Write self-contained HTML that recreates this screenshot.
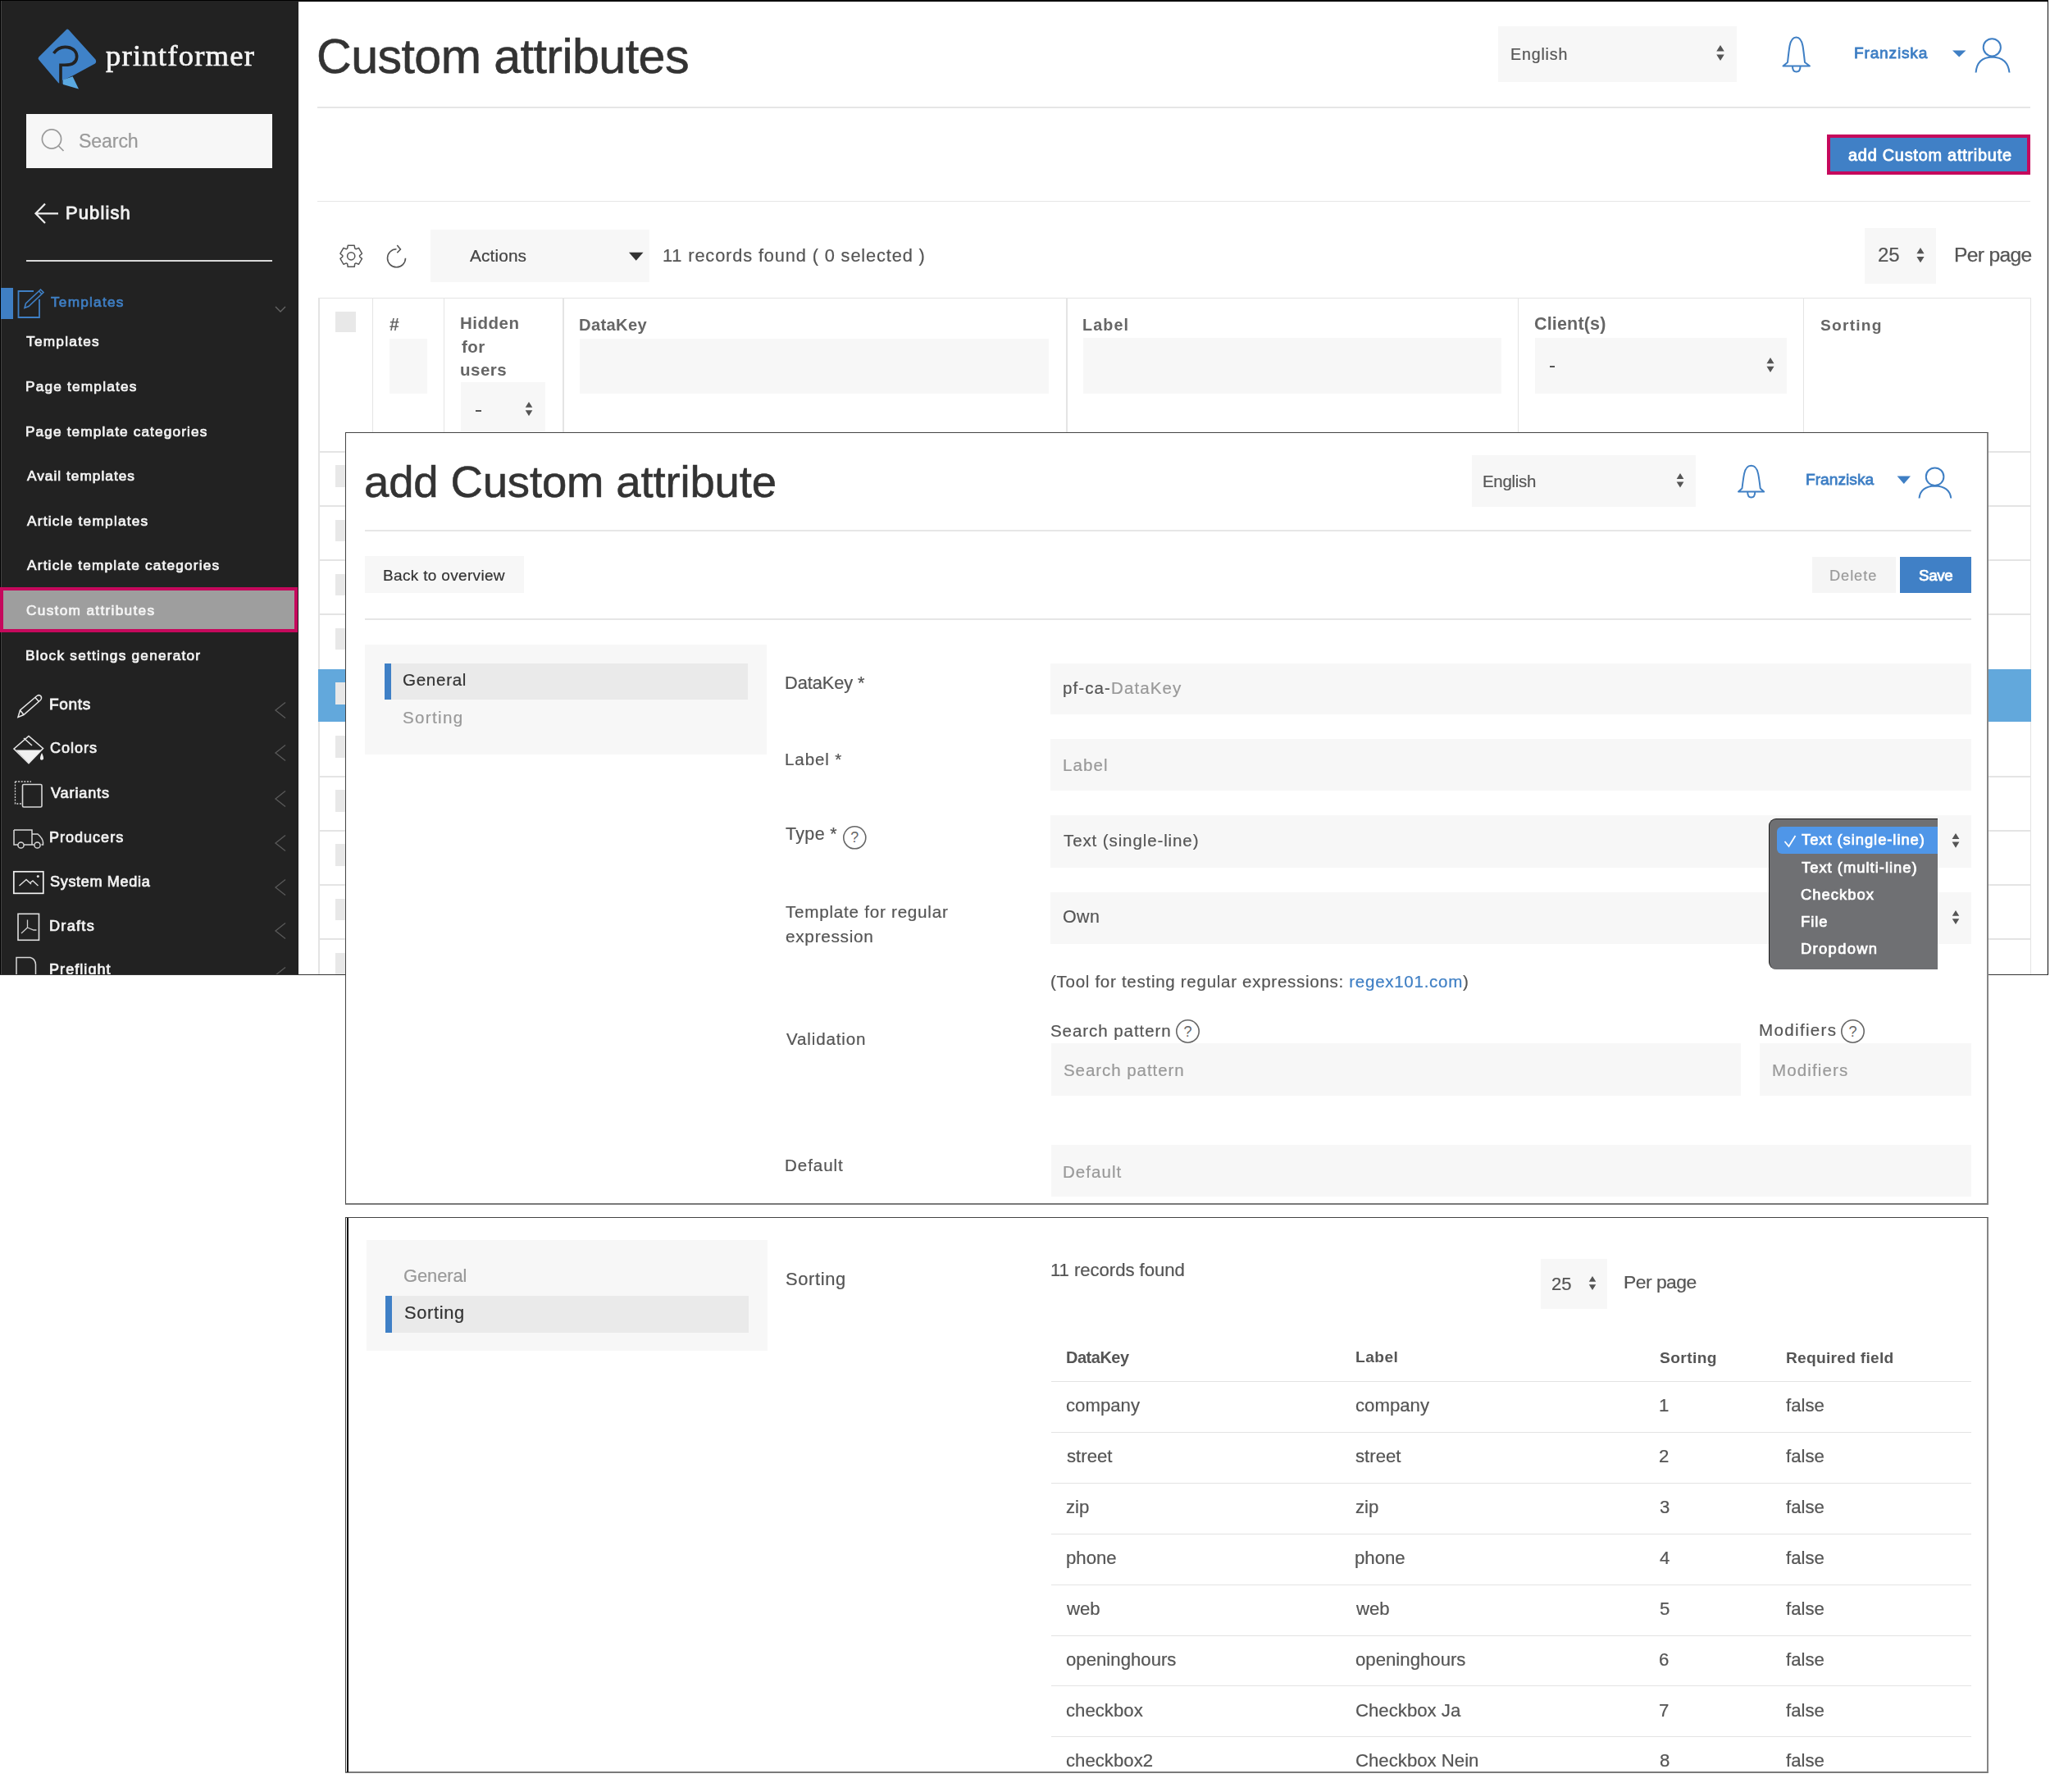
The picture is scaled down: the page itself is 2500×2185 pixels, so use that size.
<!DOCTYPE html>
<html><head><meta charset="utf-8"><title>Custom attributes</title>
<style>
html,body{margin:0;padding:0;background:#fff;}
body{width:2500px;height:2185px;position:relative;overflow:hidden;font-family:"Liberation Sans",sans-serif;}
div,svg{position:absolute;}
.t{line-height:1;white-space:pre;will-change:transform;}
</style></head><body>
<div style="left:0;top:0;width:364px;height:1188px;background:#222;overflow:hidden" id="sb">
<div style="left:0px;top:0px;width:364px;height:1px;background:#000;"></div>
<div style="left:0px;top:0px;width:1px;height:1188px;background:#000;"></div>
<div style="left:1px;top:1px;width:1px;height:1187px;background:#444;"></div>
<svg style="left:40px;top:30px;width:85px;height:82px" viewBox="40 30 85 82"><path d="M81.3,35.7 Q82.5,35 83.7,36.3 L116.5,72.5 Q118,75.5 116,77.5 L89.3,92 L76.5,98 L76.5,102.5 L71.3,101.2 L47.2,72.8 Q45.8,71.3 47.3,69.6 Z" fill="#3f82c8"/><path d="M77,97.2 L88.6,93.2 L96,108.5 L77,103 Z" fill="#5aa8e0"/><path d="M65.5,65 C70,58.5 77,56.8 82.5,57.6 C90,58.6 94.2,64 93.6,70 C93,76.5 87,79.3 79,79.3 L74,79.3 L74,103" fill="none" stroke="#222" stroke-width="3.6"/></svg>
<div class="t" style="left:129.13px;top:50.33px;font-size:36.62px;letter-spacing:1.218px;color:#f4f4f4;-webkit-text-stroke:0.7px;font-family:'Liberation Serif', serif">printformer</div>
<div style="left:32px;top:139px;width:300px;height:66px;background:#f7f7f7;"></div>
<svg style="left:45px;top:150px;width:40px;height:42px" viewBox="45 150 40 42"><circle cx="63" cy="169.5" r="11.6" fill="none" stroke="#9a9a9a" stroke-width="1.7"/><path d="M71.5,178 L77.5,184" stroke="#9a9a9a" stroke-width="1.7"/></svg>
<div class="t" style="left:96.37px;top:160.80px;font-size:23.15px;letter-spacing:-0.125px;color:#9a9a9a;-webkit-text-stroke:0.23px;font-family:'Liberation Sans', sans-serif">Search</div>
<svg style="left:38px;top:244px;width:38px;height:31px" viewBox="38 244 38 31"><path d="M71,260.3 L44,260.3 M55,248.5 L43.5,260.3 L55,272" fill="none" stroke="#eee" stroke-width="2.2"/></svg>
<div class="t" style="left:79.55px;top:248.85px;font-size:21.92px;letter-spacing:1.133px;color:#f2f2f2;-webkit-text-stroke:0.88px;font-family:'Liberation Sans', sans-serif">Publish</div>
<div style="left:32px;top:317px;width:300px;height:2px;background:#d9d9d9;"></div>
<div style="left:1px;top:351px;width:15px;height:38px;background:#3f7fc4;"></div>
<svg style="left:18px;top:350px;width:38px;height:42px" viewBox="18 350 38 42"><path d="M41,355 L22.5,355 L22.5,387 L48,387 L48,365" fill="none" stroke="#3f7fc4" stroke-width="1.8"/><path d="M30,375.5 L31.5,370 L49.5,353 L53,356.5 L35,373.5 Z M47.5,355 L51,358.5" fill="none" stroke="#3f7fc4" stroke-width="1.6"/></svg>
<div class="t" style="left:62.15px;top:359.99px;font-size:17.26px;letter-spacing:1.212px;color:#3f7fc4;-webkit-text-stroke:0.69px;font-family:'Liberation Sans', sans-serif">Templates</div>
<svg style="left:330px;top:368px;width:24px;height:18px" viewBox="330 368 24 18"><path d="M336,374 L342,380 L348,374" fill="none" stroke="#666" stroke-width="1.3"/></svg>
<div style="left:0px;top:716px;width:363px;height:55px;background:#9e9e9e;box-sizing:border-box;border:4px solid #c5095c"></div>
<div class="t" style="left:32.15px;top:407.99px;font-size:17.26px;letter-spacing:1.262px;color:#f4f4f4;-webkit-text-stroke:0.69px;font-family:'Liberation Sans', sans-serif">Templates</div>
<div class="t" style="left:31.12px;top:462.99px;font-size:17.26px;letter-spacing:1.189px;color:#f4f4f4;-webkit-text-stroke:0.69px;font-family:'Liberation Sans', sans-serif">Page templates</div>
<div class="t" style="left:31.12px;top:517.99px;font-size:17.26px;letter-spacing:1.116px;color:#f4f4f4;-webkit-text-stroke:0.69px;font-family:'Liberation Sans', sans-serif">Page template categories</div>
<div class="t" style="left:32.50px;top:571.79px;font-size:17.26px;letter-spacing:1.021px;color:#f4f4f4;-webkit-text-stroke:0.69px;font-family:'Liberation Sans', sans-serif">Avail templates</div>
<div class="t" style="left:32.50px;top:626.79px;font-size:17.26px;letter-spacing:1.234px;color:#f4f4f4;-webkit-text-stroke:0.69px;font-family:'Liberation Sans', sans-serif">Article templates</div>
<div class="t" style="left:32.50px;top:680.99px;font-size:17.26px;letter-spacing:1.190px;color:#f4f4f4;-webkit-text-stroke:0.69px;font-family:'Liberation Sans', sans-serif">Article template categories</div>
<div class="t" style="left:31.64px;top:735.99px;font-size:17.26px;letter-spacing:1.308px;color:#f4f4f4;-webkit-text-stroke:0.69px;font-family:'Liberation Sans', sans-serif">Custom attributes</div>
<div class="t" style="left:31.12px;top:791.09px;font-size:17.26px;letter-spacing:1.219px;color:#f4f4f4;-webkit-text-stroke:0.69px;font-family:'Liberation Sans', sans-serif">Block settings generator</div>
<div class="t" style="left:60.27px;top:849.31px;font-size:19.13px;letter-spacing:0.615px;color:#f2f2f2;-webkit-text-stroke:0.77px;font-family:'Liberation Sans', sans-serif">Fonts</div>
<svg style="left:330px;top:853.5px;width:24px;height:24.0px" viewBox="330 853.5 24 24.0"><path d="M348,856.0 L336,865.5 L348,875.0" fill="none" stroke="#5a5a5a" stroke-width="1.3"/></svg>
<div class="t" style="left:60.90px;top:903.09px;font-size:18.08px;letter-spacing:0.979px;color:#f2f2f2;-webkit-text-stroke:0.72px;font-family:'Liberation Sans', sans-serif">Colors</div>
<svg style="left:330px;top:906.4px;width:24px;height:24.0px" viewBox="330 906.4 24 24.0"><path d="M348,908.9 L336,918.4 L348,927.9" fill="none" stroke="#5a5a5a" stroke-width="1.3"/></svg>
<div class="t" style="left:61.80px;top:958.19px;font-size:18.08px;letter-spacing:0.864px;color:#f2f2f2;-webkit-text-stroke:0.72px;font-family:'Liberation Sans', sans-serif">Variants</div>
<svg style="left:330px;top:961.5px;width:24px;height:24.0px" viewBox="330 961.5 24 24.0"><path d="M348,964.0 L336,973.5 L348,983.0" fill="none" stroke="#5a5a5a" stroke-width="1.3"/></svg>
<div class="t" style="left:60.35px;top:1012.19px;font-size:18.08px;letter-spacing:0.972px;color:#f2f2f2;-webkit-text-stroke:0.72px;font-family:'Liberation Sans', sans-serif">Producers</div>
<svg style="left:330px;top:1015.5px;width:24px;height:24.0px" viewBox="330 1015.5 24 24.0"><path d="M348,1018.0 L336,1027.5 L348,1037.0" fill="none" stroke="#5a5a5a" stroke-width="1.3"/></svg>
<div class="t" style="left:61.08px;top:1066.39px;font-size:18.08px;letter-spacing:0.654px;color:#f2f2f2;-webkit-text-stroke:0.72px;font-family:'Liberation Sans', sans-serif">System Media</div>
<svg style="left:330px;top:1069.7px;width:24px;height:24.0px" viewBox="330 1069.7 24 24.0"><path d="M348,1072.2 L336,1081.7 L348,1091.2" fill="none" stroke="#5a5a5a" stroke-width="1.3"/></svg>
<div class="t" style="left:60.35px;top:1119.69px;font-size:18.08px;letter-spacing:1.293px;color:#f2f2f2;-webkit-text-stroke:0.72px;font-family:'Liberation Sans', sans-serif">Drafts</div>
<svg style="left:330px;top:1123px;width:24px;height:24px" viewBox="330 1123 24 24"><path d="M348,1125.5 L336,1135 L348,1144.5" fill="none" stroke="#5a5a5a" stroke-width="1.3"/></svg>
<div class="t" style="left:60.35px;top:1173.19px;font-size:18.08px;letter-spacing:1.034px;color:#f2f2f2;-webkit-text-stroke:0.72px;font-family:'Liberation Sans', sans-serif">Preflight</div>
<svg style="left:330px;top:1176.5px;width:24px;height:24.0px" viewBox="330 1176.5 24 24.0"><path d="M348,1179.0 L336,1188.5 L348,1198.0" fill="none" stroke="#5a5a5a" stroke-width="1.3"/></svg>
<svg style="left:16px;top:842px;width:40px;height:38px" viewBox="16 842 40 38"><path d="M22,874.5 L24.5,866 L45,848.5 Q48,846.5 50,849 Q51.5,851.5 49,854 L29,871.5 Z M24.5,866 L29,871.5 M43,850.5 L47.5,855.5" fill="none" stroke="#e8e8e8" stroke-width="1.5"/></svg>
<svg style="left:12px;top:893px;width:46px;height:41px" viewBox="12 893 46 41"><path d="M17,913 L35,897.5 L52.5,912.5 L35,930.5 Z" fill="none" stroke="#e8e8e8" stroke-width="1.6"/><path d="M19.5,914.5 L50.5,914.5 L35,930 Z" fill="#f0f0f0"/><path d="M29,900 L39,909" stroke="#e8e8e8" stroke-width="1.5"/><path d="M51,918 Q48.5,923 49,925.5 Q50.5,928 53,925.5 Q53.5,923 51,918 Z" fill="#f0f0f0"/></svg>
<svg style="left:14px;top:948px;width:42px;height:40px" viewBox="14 948 42 40"><path d="M18.5,953 L38,953 M18.5,953 L18.5,980 L27,980" fill="none" stroke="#d8d8d8" stroke-width="1.3" stroke-dasharray="2,1.6"/><rect x="27.5" y="956.5" width="23.5" height="27.5" rx="1.5" fill="none" stroke="#d8d8d8" stroke-width="1.6"/></svg>
<svg style="left:12px;top:1005px;width:46px;height:35px" viewBox="12 1005 46 35"><path d="M17,1012 L39,1012 L39,1030 M17,1012 L17,1030 L22,1030 M29,1030 L41.5,1030 M39,1017 L46,1017 Q52,1022 52.5,1027 L52.5,1030 L50.5,1030" fill="none" stroke="#d8d8d8" stroke-width="1.5"/><circle cx="25.5" cy="1030.5" r="3.6" fill="none" stroke="#d8d8d8" stroke-width="1.5"/><circle cx="45.5" cy="1030.5" r="3.6" fill="none" stroke="#d8d8d8" stroke-width="1.5"/></svg>
<svg style="left:12px;top:1058px;width:46px;height:36px" viewBox="12 1058 46 36"><rect x="16.8" y="1062.8" width="36" height="26.5" fill="none" stroke="#f0f0f0" stroke-width="1.7"/><path d="M23.5,1080 L32,1072.5 L38,1078 M36,1077 L40,1074 L46.5,1080" fill="none" stroke="#e0e0e0" stroke-width="1.4"/><circle cx="46.3" cy="1068.5" r="1.5" fill="#e0e0e0"/></svg>
<svg style="left:16px;top:1108px;width:38px;height:44px" viewBox="16 1108 38 44"><rect x="22" y="1114.3" width="25.5" height="32" fill="none" stroke="#e0e0e0" stroke-width="1.6"/><path d="M33.5,1121.5 L33.5,1131 L26,1138 M33.5,1131 L41,1134 L44.5,1134" fill="none" stroke="#d0d0d0" stroke-width="1.3"/></svg>
<svg style="left:14px;top:1162px;width:40px;height:28px" viewBox="14 1162 40 28"><path d="M20,1190 L20,1167.5 L37,1167.5 Q43,1169 43.5,1176 L43.5,1190" fill="none" stroke="#d8d8d8" stroke-width="1.5"/></svg>
</div>
<div style="left:364px;top:0px;width:2133px;height:2px;background:#0a0a0a;"></div>
<div style="left:2497px;top:0px;width:1px;height:1189px;background:#0a0a0a;"></div>
<div style="left:0px;top:1188px;width:2498px;height:1px;background:#333;"></div>
<div class="t" style="left:386.04px;top:39.41px;font-size:59.18px;letter-spacing:-0.576px;color:#333;-webkit-text-stroke:0.59px;font-family:'Liberation Sans', sans-serif">Custom attributes</div>
<div style="left:387px;top:130px;width:2089px;height:2px;background:#e6e6e6;"></div>
<div style="left:1827px;top:32px;width:291px;height:68px;background:#f7f7f7;"></div>
<div class="t" style="left:1841.73px;top:56.72px;font-size:19.59px;letter-spacing:0.853px;color:#555;-webkit-text-stroke:0.20px;font-family:'Liberation Sans', sans-serif">English</div>
<svg style="left:2086.2px;top:51.2px;width:24.0px;height:27.0px" viewBox="2086.2 51.2 24.0 27.0"><path d="M2093.45,62.800000000000004 L2098.2,55.2 L2102.95,62.800000000000004 Z M2093.45,66.60000000000001 L2098.2,74.2 L2102.95,66.60000000000001 Z" fill="#555"/></svg>
<svg style="left:2166px;top:40px;width:50px;height:54px" viewBox="2166 40 50 54"><path d="M2174.5,80.5 L2180,76 Q2181.5,62 2182.5,56 Q2184.5,45.5 2190.5,45.5 Q2196.5,45.5 2198.5,56 Q2199.5,62 2201,76 L2207,80.5 Z" fill="none" stroke="#3f7fc4" stroke-width="2" stroke-linejoin="round"/><path d="M2186,81 Q2186,87.5 2190.7,87.5 Q2195.5,87.5 2195.5,81" fill="none" stroke="#3f7fc4" stroke-width="2"/></svg>
<div class="t" style="left:2261.17px;top:54.97px;font-size:19.18px;letter-spacing:0.779px;color:#3d7ec4;-webkit-text-stroke:0.77px;font-family:'Liberation Sans', sans-serif">Franziska</div>
<svg style="left:2378px;top:58px;width:22px;height:14px" viewBox="2378 58 22 14"><path d="M2381,61.5 L2397.5,61.5 L2389.2,69.5 Z" fill="#3f7fc4"/></svg>
<svg style="left:2402px;top:42px;width:56px;height:50px" viewBox="2402 42 56 50"><circle cx="2429.3" cy="57.8" r="10.6" fill="none" stroke="#3f7fc4" stroke-width="2"/><path d="M2409.6,88.5 Q2411,70 2429.5,69.5 Q2448.5,70 2450.5,88.5" fill="none" stroke="#3f7fc4" stroke-width="2"/></svg>
<div style="left:2228px;top:164px;width:248px;height:49px;background:#4080c6;box-sizing:border-box;border:4.3px solid #c5095c"></div>
<div class="t" style="left:2254.11px;top:179.69px;font-size:19.86px;letter-spacing:0.770px;color:#fff;-webkit-text-stroke:0.79px;font-family:'Liberation Sans', sans-serif">add Custom attribute</div>
<div style="left:387px;top:245px;width:2089px;height:1px;background:#e6e6e6;"></div>
<svg style="left:408px;top:294px;width:40px;height:37px" viewBox="408 294 40 37"><circle cx="428.2" cy="312.3" r="4.6" fill="none" stroke="#555" stroke-width="1.5"/><path d="M432.76,302.95 L432.18,299.29 L424.22,299.29 L423.64,302.95 L422.38,303.68 L418.92,302.35 L414.95,309.24 L417.83,311.57 L417.83,313.03 L414.95,315.36 L418.92,322.25 L422.38,320.92 L423.64,321.65 L424.22,325.31 L432.18,325.31 L432.76,321.65 L434.02,320.92 L437.48,322.25 L441.45,315.36 L438.57,313.03 L438.57,311.57 L441.45,309.24 L437.48,302.35 L434.02,303.68 Z" fill="none" stroke="#555" stroke-width="1.5" stroke-linejoin="round"/></svg>
<svg style="left:465px;top:294px;width:37px;height:36px" viewBox="465 294 37 36"><path d="M483.5,303.8 A11,11 0 1 0 494.5,314.8" fill="none" stroke="#555" stroke-width="1.6"/><path d="M484.3,299 L488.4,304 L484.3,308.3" fill="none" stroke="#555" stroke-width="1.6"/></svg>
<div style="left:525px;top:280px;width:267px;height:64px;background:#f7f7f7;"></div>
<div class="t" style="left:573.00px;top:302.07px;font-size:20.82px;letter-spacing:0.124px;color:#444;-webkit-text-stroke:0.21px;font-family:'Liberation Sans', sans-serif">Actions</div>
<svg style="left:762px;top:304px;width:28px;height:18px" viewBox="762 304 28 18"><path d="M767,307.8 L784.5,307.8 L775.7,317.8 Z" fill="#333"/></svg>
<div class="t" style="left:807.68px;top:301.26px;font-size:21.78px;letter-spacing:0.876px;color:#555;-webkit-text-stroke:0.22px;font-family:'Liberation Sans', sans-serif">11 records found ( 0 selected )</div>
<div style="left:2274px;top:278px;width:87px;height:68px;background:#f7f7f7;"></div>
<div class="t" style="left:2289.50px;top:299.48px;font-size:24.00px;letter-spacing:0.000px;color:#555;-webkit-text-stroke:0.24px;font-family:'Liberation Sans', sans-serif">25</div>
<svg style="left:2330.2px;top:298.2px;width:24.0px;height:26.30000000000001px" viewBox="2330.2 298.2 24.0 26.30000000000001"><path d="M2337.625,309.52 L2342.2,302.2 L2346.7749999999996,309.52 Z M2337.625,313.18 L2342.2,320.5 L2346.7749999999996,313.18 Z" fill="#555"/></svg>
<div class="t" style="left:2382.73px;top:299.14px;font-size:24.64px;letter-spacing:-0.690px;color:#555;-webkit-text-stroke:0.25px;font-family:'Liberation Sans', sans-serif">Per page</div>
<div style="left:388px;top:363px;width:2089px;height:1px;background:#e4e4e4;"></div>
<div style="left:388px;top:363px;width:2px;height:825px;background:#e4e4e4;"></div>
<div style="left:2476px;top:363px;width:1px;height:825px;background:#e4e4e4;"></div>
<div style="left:454px;top:363px;width:1px;height:187px;background:#e4e4e4;"></div>
<div style="left:541px;top:363px;width:1px;height:187px;background:#e4e4e4;"></div>
<div style="left:686px;top:363px;width:2px;height:187px;background:#e4e4e4;"></div>
<div style="left:1300px;top:363px;width:2px;height:187px;background:#e4e4e4;"></div>
<div style="left:1851px;top:363px;width:1px;height:187px;background:#e4e4e4;"></div>
<div style="left:2199px;top:363px;width:1px;height:187px;background:#e4e4e4;"></div>
<div style="left:388px;top:550px;width:2089px;height:2px;background:#e4e4e4;"></div>
<div style="left:388px;top:616px;width:2089px;height:2px;background:#e4e4e4;"></div>
<div style="left:388px;top:682px;width:2089px;height:2px;background:#e4e4e4;"></div>
<div style="left:388px;top:748px;width:2089px;height:2px;background:#e4e4e4;"></div>
<div style="left:388px;top:946px;width:2089px;height:2px;background:#e4e4e4;"></div>
<div style="left:388px;top:1012px;width:2089px;height:2px;background:#e4e4e4;"></div>
<div style="left:388px;top:1078px;width:2089px;height:2px;background:#e4e4e4;"></div>
<div style="left:388px;top:1144px;width:2089px;height:2px;background:#e4e4e4;"></div>
<div style="left:388px;top:816px;width:2089px;height:64px;background:#62a8dc;"></div>
<div style="left:409px;top:380px;width:25px;height:25px;background:#e8e8e8;"></div>
<div style="left:409px;top:567px;width:25px;height:27px;background:#e8e8e8;"></div>
<div style="left:409px;top:634px;width:25px;height:26px;background:#e8e8e8;"></div>
<div style="left:409px;top:700px;width:25px;height:26px;background:#e8e8e8;"></div>
<div style="left:409px;top:766px;width:25px;height:26px;background:#e8e8e8;"></div>
<div style="left:409px;top:832px;width:25px;height:27px;background:#e8e8e8;"></div>
<div style="left:409px;top:897px;width:25px;height:27px;background:#e8e8e8;"></div>
<div style="left:409px;top:963px;width:25px;height:27px;background:#e8e8e8;"></div>
<div style="left:409px;top:1029px;width:25px;height:27px;background:#e8e8e8;"></div>
<div style="left:409px;top:1096px;width:25px;height:26px;background:#e8e8e8;"></div>
<div style="left:409px;top:1162px;width:25px;height:26px;background:#e8e8e8;"></div>
<div style="left:475px;top:413px;width:46px;height:67px;background:#f7f7f7;"></div>
<div style="left:707px;top:413px;width:572px;height:67px;background:#f7f7f7;"></div>
<div style="left:1321px;top:412px;width:510px;height:68px;background:#f7f7f7;"></div>
<div style="left:1872px;top:412px;width:307px;height:68px;background:#f7f7f7;"></div>
<div style="left:562px;top:466px;width:103px;height:74px;background:#f7f7f7;"></div>
<div class="t" style="left:474.79px;top:384.69px;font-size:21.16px;letter-spacing:0.000px;color:#666;font-weight:700;font-family:'Liberation Sans', sans-serif">#</div>
<div class="t" style="left:561.47px;top:384.25px;font-size:20.50px;letter-spacing:0.500px;color:#666;font-weight:700;font-family:'Liberation Sans', sans-serif">Hidden</div>
<div class="t" style="left:562.50px;top:412.55px;font-size:20.50px;letter-spacing:0.500px;color:#666;font-weight:700;font-family:'Liberation Sans', sans-serif">for</div>
<div class="t" style="left:561.47px;top:440.85px;font-size:20.50px;letter-spacing:0.500px;color:#666;font-weight:700;font-family:'Liberation Sans', sans-serif">users</div>
<div class="t" style="left:706.09px;top:385.55px;font-size:20.14px;letter-spacing:0.370px;color:#666;font-weight:700;font-family:'Liberation Sans', sans-serif">DataKey</div>
<div class="t" style="left:1319.62px;top:386.70px;font-size:19.73px;letter-spacing:1.125px;color:#666;font-weight:700;font-family:'Liberation Sans', sans-serif">Label</div>
<div class="t" style="left:1871.34px;top:384.99px;font-size:21.51px;letter-spacing:0.170px;color:#666;font-weight:700;font-family:'Liberation Sans', sans-serif">Client(s)</div>
<div class="t" style="left:2219.92px;top:386.77px;font-size:19.18px;letter-spacing:1.223px;color:#666;font-weight:700;font-family:'Liberation Sans', sans-serif">Sorting</div>
<div style="left:580px;top:500px;width:7px;height:2px;background:#555;"></div>
<div style="left:1890px;top:446px;width:6px;height:2px;background:#555;"></div>
<svg style="left:633.4px;top:485.6px;width:24.0px;height:25.19999999999999px" viewBox="633.4 485.6 24.0 25.19999999999999"><path d="M641.1,496.48 L645.4,489.6 L649.6999999999999,496.48 Z M641.1,499.92 L645.4,506.8 L649.6999999999999,499.92 Z" fill="#555"/></svg>
<svg style="left:2146.8px;top:431.8px;width:24.0px;height:26.099999999999966px" viewBox="2146.8 431.8 24.0 26.099999999999966"><path d="M2154.275,443.04 L2158.8,435.8 L2163.3250000000003,443.04 Z M2154.275,446.65999999999997 L2158.8,453.9 L2163.3250000000003,446.65999999999997 Z" fill="#555"/></svg>
<div style="left:421px;top:527px;width:2004px;height:942px;background:#fff;box-sizing:border-box;border:1px solid #444;border-right:2px solid #858585;border-bottom:2px solid #7a7a7a"></div>
<div class="t" style="left:443.92px;top:561.45px;font-size:54.52px;letter-spacing:-0.160px;color:#333;-webkit-text-stroke:0.55px;font-family:'Liberation Sans', sans-serif">add Custom attribute</div>
<div style="left:1795px;top:555px;width:273px;height:63px;background:#f7f7f7;"></div>
<div class="t" style="left:1808.37px;top:576.62px;font-size:20.41px;letter-spacing:-0.277px;color:#555;-webkit-text-stroke:0.20px;font-family:'Liberation Sans', sans-serif">English</div>
<svg style="left:2036.6px;top:572.5px;width:24.0px;height:25.5px" viewBox="2036.6 572.5 24.0 25.5"><path d="M2044.225,583.5 L2048.6,576.5 L2052.975,583.5 Z M2044.225,587.0 L2048.6,594 L2052.975,587.0 Z" fill="#555"/></svg>
<svg style="left:2112px;top:562px;width:48px;height:50px" viewBox="2112 562 48 50"><path d="M2120,599.5 L2124.5,595.5 Q2126,583 2127,578 Q2129,567.8 2135.6,567.8 Q2142.2,567.8 2144.2,578 Q2145.2,583 2146.7,595.5 L2151.2,599.5 Z" fill="none" stroke="#3f7fc4" stroke-width="1.9" stroke-linejoin="round"/><path d="M2131.2,600 Q2131.2,606.5 2135.7,606.5 Q2140.2,606.5 2140.2,600" fill="none" stroke="#3f7fc4" stroke-width="1.9"/></svg>
<div class="t" style="left:2201.77px;top:575.17px;font-size:19.18px;letter-spacing:0.004px;color:#3d7ec4;-webkit-text-stroke:0.77px;font-family:'Liberation Sans', sans-serif">Franziska</div>
<svg style="left:2310px;top:577px;width:24px;height:17px" viewBox="2310 577 24 17"><path d="M2313.6,580.6 L2330,580.6 L2321.8,590 Z" fill="#3f7fc4"/></svg>
<svg style="left:2334px;top:564px;width:52px;height:48px" viewBox="2334 564 52 48"><circle cx="2359.6" cy="581.2" r="10.8" fill="none" stroke="#3f7fc4" stroke-width="2"/><path d="M2340.5,607.5 Q2342,593 2359.8,592.5 Q2377.5,593 2379.3,607.5" fill="none" stroke="#3f7fc4" stroke-width="2"/></svg>
<div style="left:445px;top:646px;width:1959px;height:2px;background:#e6e6e6;"></div>
<div style="left:445px;top:678px;width:194px;height:45px;background:#f7f7f7;"></div>
<div class="t" style="left:467.48px;top:692.08px;font-size:19.04px;letter-spacing:0.317px;color:#333;-webkit-text-stroke:0.19px;font-family:'Liberation Sans', sans-serif">Back to overview</div>
<div style="left:2210px;top:679px;width:102px;height:44px;background:#f5f5f5;"></div>
<div class="t" style="left:2231.34px;top:693.28px;font-size:18.22px;letter-spacing:0.930px;color:#9a9a9a;-webkit-text-stroke:0.18px;font-family:'Liberation Sans', sans-serif">Delete</div>
<div style="left:2317px;top:679px;width:87px;height:44px;background:#4080c6;"></div>
<div class="t" style="left:2339.85px;top:692.84px;font-size:18.73px;letter-spacing:-0.357px;color:#fff;-webkit-text-stroke:0.75px;font-family:'Liberation Sans', sans-serif">Save</div>
<div style="left:445px;top:754px;width:1959px;height:2px;background:#e6e6e6;"></div>
<div style="left:445px;top:786px;width:490px;height:134px;background:#f7f7f7;"></div>
<div style="left:469px;top:809px;width:443px;height:44px;background:#eaeaea;"></div>
<div style="left:469px;top:809px;width:8px;height:44px;background:#3f80c6;"></div>
<div class="t" style="left:490.87px;top:819.49px;font-size:20.68px;letter-spacing:0.639px;color:#333;-webkit-text-stroke:0.21px;font-family:'Liberation Sans', sans-serif">General</div>
<div class="t" style="left:491.08px;top:864.61px;font-size:20.55px;letter-spacing:1.328px;color:#999;-webkit-text-stroke:0.21px;font-family:'Liberation Sans', sans-serif">Sorting</div>
<div class="t" style="left:956.86px;top:822.10px;font-size:21.74px;letter-spacing:-0.043px;color:#555;-webkit-text-stroke:0.22px;font-family:'Liberation Sans', sans-serif">DataKey *</div>
<div class="t" style="left:956.96px;top:916.01px;font-size:20.55px;letter-spacing:0.892px;color:#555;-webkit-text-stroke:0.21px;font-family:'Liberation Sans', sans-serif">Label *</div>
<div class="t" style="left:958.17px;top:1007.34px;font-size:21.45px;letter-spacing:0.364px;color:#555;-webkit-text-stroke:0.21px;font-family:'Liberation Sans', sans-serif">Type *</div>
<svg style="left:1026.1000000000001px;top:1004.5px;width:32.59999999999991px;height:32.59999999999991px" viewBox="1026.1000000000001 1004.5 32.59999999999991 32.59999999999991"><circle cx="1042.4" cy="1020.8" r="13.5" fill="none" stroke="#666" stroke-width="1.6"/><text x="1042.4" y="1026.806" text-anchor="middle" font-family="Liberation Sans" font-size="17.875" fill="#666">?</text></svg>
<div class="t" style="left:958.19px;top:1101.59px;font-size:20.68px;letter-spacing:0.733px;color:#555;-webkit-text-stroke:0.21px;font-family:'Liberation Sans', sans-serif">Template for regular</div>
<div class="t" style="left:957.77px;top:1131.57px;font-size:20.82px;letter-spacing:0.690px;color:#555;-webkit-text-stroke:0.21px;font-family:'Liberation Sans', sans-serif">expression</div>
<div class="t" style="left:958.90px;top:1256.61px;font-size:20.55px;letter-spacing:0.848px;color:#555;-webkit-text-stroke:0.21px;font-family:'Liberation Sans', sans-serif">Validation</div>
<div class="t" style="left:957.26px;top:1410.61px;font-size:20.55px;letter-spacing:0.949px;color:#555;-webkit-text-stroke:0.21px;font-family:'Liberation Sans', sans-serif">Default</div>
<div style="left:1281px;top:809px;width:1123px;height:62px;background:#f7f7f7;"></div>
<div style="left:1281px;top:901px;width:1123px;height:63px;background:#f7f7f7;"></div>
<div style="left:1281px;top:994px;width:1123px;height:64px;background:#f7f7f7;"></div>
<div style="left:1281px;top:1088px;width:1123px;height:63px;background:#f7f7f7;"></div>
<div class="t" style="left:1296.07px;top:828.61px;font-size:20.55px;letter-spacing:1.083px;color:#555;-webkit-text-stroke:0.21px;font-family:'Liberation Sans', sans-serif"><span style="color:#555">pf-ca-</span><span style="color:#999">DataKey</span></div>
<div class="t" style="left:1295.66px;top:922.81px;font-size:20.55px;letter-spacing:1.061px;color:#999;-webkit-text-stroke:0.21px;font-family:'Liberation Sans', sans-serif">Label</div>
<div class="t" style="left:1296.89px;top:1015.21px;font-size:20.55px;letter-spacing:0.877px;color:#555;-webkit-text-stroke:0.21px;font-family:'Liberation Sans', sans-serif">Text (single-line)</div>
<svg style="left:2372.9px;top:1012.2px;width:24.0px;height:25.700000000000045px" viewBox="2372.9 1012.2 24.0 25.700000000000045"><path d="M2380.475,1023.2800000000001 L2384.9,1016.2 L2389.3250000000003,1023.2800000000001 Z M2380.475,1026.8200000000002 L2384.9,1033.9 L2389.3250000000003,1026.8200000000002 Z" fill="#555"/></svg>
<div class="t" style="left:1296.44px;top:1107.86px;font-size:21.43px;letter-spacing:0.450px;color:#555;-webkit-text-stroke:0.21px;font-family:'Liberation Sans', sans-serif">Own</div>
<svg style="left:2372.9px;top:1106.2px;width:24.0px;height:25.0px" viewBox="2372.9 1106.2 24.0 25.0"><path d="M2380.65,1117.0 L2384.9,1110.2 L2389.15,1117.0 Z M2380.65,1120.4 L2384.9,1127.2 L2389.15,1120.4 Z" fill="#555"/></svg>
<div class="t" style="left:1280.67px;top:1187.01px;font-size:20.55px;letter-spacing:0.703px;color:#555;-webkit-text-stroke:0.21px;font-family:'Liberation Sans', sans-serif"><span style="color:#555">(Tool for testing regular expressions: </span><span style="color:#3f7fc4">regex101.com</span><span style="color:#555">)</span></div>
<div class="t" style="left:1281.08px;top:1247.01px;font-size:20.55px;letter-spacing:0.915px;color:#555;-webkit-text-stroke:0.21px;font-family:'Liberation Sans', sans-serif">Search pattern</div>
<svg style="left:1431.9px;top:1240.7px;width:33.0px;height:33.0px" viewBox="1431.9 1240.7 33.0 33.0"><circle cx="1448.4" cy="1257.2" r="13.7" fill="none" stroke="#666" stroke-width="1.6"/><text x="1448.4" y="1263.29" text-anchor="middle" font-family="Liberation Sans" font-size="18.125" fill="#666">?</text></svg>
<div class="t" style="left:2144.56px;top:1246.41px;font-size:20.55px;letter-spacing:1.338px;color:#555;-webkit-text-stroke:0.21px;font-family:'Liberation Sans', sans-serif">Modifiers</div>
<svg style="left:2243.3px;top:1240.5px;width:33.0px;height:33.0px" viewBox="2243.3 1240.5 33.0 33.0"><circle cx="2259.8" cy="1257" r="13.7" fill="none" stroke="#666" stroke-width="1.6"/><text x="2259.8" y="1263.09" text-anchor="middle" font-family="Liberation Sans" font-size="18.125" fill="#666">?</text></svg>
<div style="left:1282px;top:1272px;width:841px;height:64px;background:#f7f7f7;"></div>
<div style="left:2146px;top:1272px;width:258px;height:64px;background:#f7f7f7;"></div>
<div class="t" style="left:1296.58px;top:1295.21px;font-size:20.55px;letter-spacing:0.915px;color:#999;-webkit-text-stroke:0.21px;font-family:'Liberation Sans', sans-serif">Search pattern</div>
<div class="t" style="left:2161.16px;top:1294.61px;font-size:20.55px;letter-spacing:1.113px;color:#999;-webkit-text-stroke:0.21px;font-family:'Liberation Sans', sans-serif">Modifiers</div>
<div style="left:1282px;top:1396px;width:1122px;height:63px;background:#f7f7f7;"></div>
<div class="t" style="left:1295.76px;top:1419.01px;font-size:20.55px;letter-spacing:1.016px;color:#999;-webkit-text-stroke:0.21px;font-family:'Liberation Sans', sans-serif">Default</div>
<div style="left:2157px;top:998px;width:206px;height:184px;background:#6f7073;box-sizing:border-box;border-left:1.5px solid #1c1c1c;border-top:1.5px solid #1c1c1c;border-radius:9px 0 0 9px"></div>
<div style="left:2167px;top:1007.7px;width:196px;height:33px;background:#4f96e8;border-radius:6px 0 0 6px"></div>
<svg style="left:2172px;top:1015px;width:22px;height:21px" viewBox="2172 1015 22 21"><path d="M2176.5,1026 L2181.5,1032 L2189.5,1019" fill="none" stroke="#fff" stroke-width="1.8"/></svg>
<div class="t" style="left:2196.93px;top:1015.46px;font-size:18.36px;letter-spacing:0.953px;color:#fff;-webkit-text-stroke:0.73px;font-family:'Liberation Sans', sans-serif">Text (single-line)</div>
<div class="t" style="left:2196.93px;top:1048.76px;font-size:18.36px;letter-spacing:1.013px;color:#fff;-webkit-text-stroke:0.73px;font-family:'Liberation Sans', sans-serif">Text (multi-line)</div>
<div class="t" style="left:2196.38px;top:1081.96px;font-size:18.36px;letter-spacing:1.025px;color:#fff;-webkit-text-stroke:0.73px;font-family:'Liberation Sans', sans-serif">Checkbox</div>
<div class="t" style="left:2195.83px;top:1115.26px;font-size:18.36px;letter-spacing:0.918px;color:#fff;-webkit-text-stroke:0.73px;font-family:'Liberation Sans', sans-serif">File</div>
<div class="t" style="left:2195.83px;top:1148.16px;font-size:18.36px;letter-spacing:1.333px;color:#fff;-webkit-text-stroke:0.73px;font-family:'Liberation Sans', sans-serif">Dropdown</div>
<div style="left:421px;top:1484px;width:2004px;height:678px;background:#fff;box-sizing:border-box;border:1px solid #444;border-right:2px solid #858585;border-bottom:2px solid #7a7a7a"></div>
<div style="left:423px;top:1485px;width:2px;height:676px;background:#111;"></div>
<div style="left:447px;top:1512px;width:489px;height:135px;background:#f7f7f7;"></div>
<div style="left:470px;top:1580px;width:443px;height:45px;background:#eaeaea;"></div>
<div style="left:470px;top:1580px;width:8px;height:45px;background:#3f80c6;"></div>
<div class="t" style="left:492.40px;top:1544.95px;font-size:21.92px;letter-spacing:-0.086px;color:#999;-webkit-text-stroke:0.22px;font-family:'Liberation Sans', sans-serif">General</div>
<div class="t" style="left:492.62px;top:1590.35px;font-size:21.92px;letter-spacing:0.627px;color:#333;-webkit-text-stroke:0.22px;font-family:'Liberation Sans', sans-serif">Sorting</div>
<div class="t" style="left:958.42px;top:1548.55px;font-size:21.92px;letter-spacing:0.627px;color:#555;-webkit-text-stroke:0.22px;font-family:'Liberation Sans', sans-serif">Sorting</div>
<div class="t" style="left:1281.45px;top:1538.41px;font-size:22.19px;letter-spacing:-0.073px;color:#555;-webkit-text-stroke:0.22px;font-family:'Liberation Sans', sans-serif">11 records found</div>
<div style="left:1879px;top:1535px;width:81px;height:61px;background:#f7f7f7;"></div>
<div class="t" style="left:1892.40px;top:1554.78px;font-size:22.00px;letter-spacing:0.000px;color:#555;-webkit-text-stroke:0.22px;font-family:'Liberation Sans', sans-serif">25</div>
<svg style="left:1930.1px;top:1551.6px;width:24.0px;height:25.0px" viewBox="1930.1 1551.6 24.0 25.0"><path d="M1937.85,1562.3999999999999 L1942.1,1555.6 L1946.35,1562.3999999999999 Z M1937.85,1565.8 L1942.1,1572.6 L1946.35,1565.8 Z" fill="#555"/></svg>
<div class="t" style="left:1979.87px;top:1552.42px;font-size:22.90px;letter-spacing:-0.525px;color:#555;-webkit-text-stroke:0.23px;font-family:'Liberation Sans', sans-serif">Per page</div>
<div class="t" style="left:1300.00px;top:1644.77px;font-size:20.00px;letter-spacing:-0.486px;color:#555;font-weight:700;font-family:'Liberation Sans', sans-serif">DataKey</div>
<div class="t" style="left:1652.65px;top:1645.47px;font-size:19.18px;letter-spacing:0.440px;color:#555;font-weight:700;font-family:'Liberation Sans', sans-serif">Label</div>
<div class="t" style="left:2024.22px;top:1645.77px;font-size:19.18px;letter-spacing:0.406px;color:#555;font-weight:700;font-family:'Liberation Sans', sans-serif">Sorting</div>
<div class="t" style="left:2177.55px;top:1645.77px;font-size:19.18px;letter-spacing:0.258px;color:#555;font-weight:700;font-family:'Liberation Sans', sans-serif">Required field</div>
<div style="left:1282px;top:1684px;width:1122px;height:1px;background:#e3e3e3"></div>
<div class="t" style="left:1300.31px;top:1703.11px;font-size:22.20px;letter-spacing:0.000px;color:#555;-webkit-text-stroke:0.22px;font-family:'Liberation Sans', sans-serif">company</div>
<div class="t" style="left:1652.91px;top:1703.11px;font-size:22.20px;letter-spacing:0.000px;color:#555;-webkit-text-stroke:0.22px;font-family:'Liberation Sans', sans-serif">company</div>
<div class="t" style="left:2023.05px;top:1703.11px;font-size:22.20px;letter-spacing:0.000px;color:#555;-webkit-text-stroke:0.22px;font-family:'Liberation Sans', sans-serif">1</div>
<div class="t" style="left:2178.48px;top:1703.11px;font-size:22.20px;letter-spacing:0.000px;color:#555;-webkit-text-stroke:0.22px;font-family:'Liberation Sans', sans-serif">false</div>
<div style="left:1282px;top:1746px;width:1122px;height:1px;background:#e3e3e3"></div>
<div class="t" style="left:1300.76px;top:1765.01px;font-size:22.20px;letter-spacing:0.000px;color:#555;-webkit-text-stroke:0.22px;font-family:'Liberation Sans', sans-serif">street</div>
<div class="t" style="left:1653.36px;top:1765.01px;font-size:22.20px;letter-spacing:0.000px;color:#555;-webkit-text-stroke:0.22px;font-family:'Liberation Sans', sans-serif">street</div>
<div class="t" style="left:2023.49px;top:1765.01px;font-size:22.20px;letter-spacing:0.000px;color:#555;-webkit-text-stroke:0.22px;font-family:'Liberation Sans', sans-serif">2</div>
<div class="t" style="left:2178.48px;top:1765.01px;font-size:22.20px;letter-spacing:0.000px;color:#555;-webkit-text-stroke:0.22px;font-family:'Liberation Sans', sans-serif">false</div>
<div style="left:1282px;top:1808px;width:1122px;height:1px;background:#e3e3e3"></div>
<div class="t" style="left:1300.31px;top:1826.91px;font-size:22.20px;letter-spacing:0.000px;color:#555;-webkit-text-stroke:0.22px;font-family:'Liberation Sans', sans-serif">zip</div>
<div class="t" style="left:1652.91px;top:1826.91px;font-size:22.20px;letter-spacing:0.000px;color:#555;-webkit-text-stroke:0.22px;font-family:'Liberation Sans', sans-serif">zip</div>
<div class="t" style="left:2023.93px;top:1826.91px;font-size:22.20px;letter-spacing:0.000px;color:#555;-webkit-text-stroke:0.22px;font-family:'Liberation Sans', sans-serif">3</div>
<div class="t" style="left:2178.48px;top:1826.91px;font-size:22.20px;letter-spacing:0.000px;color:#555;-webkit-text-stroke:0.22px;font-family:'Liberation Sans', sans-serif">false</div>
<div style="left:1282px;top:1870px;width:1122px;height:1px;background:#e3e3e3"></div>
<div class="t" style="left:1299.87px;top:1888.81px;font-size:22.20px;letter-spacing:0.000px;color:#555;-webkit-text-stroke:0.22px;font-family:'Liberation Sans', sans-serif">phone</div>
<div class="t" style="left:1652.47px;top:1888.81px;font-size:22.20px;letter-spacing:0.000px;color:#555;-webkit-text-stroke:0.22px;font-family:'Liberation Sans', sans-serif">phone</div>
<div class="t" style="left:2024.16px;top:1888.81px;font-size:22.20px;letter-spacing:0.000px;color:#555;-webkit-text-stroke:0.22px;font-family:'Liberation Sans', sans-serif">4</div>
<div class="t" style="left:2178.48px;top:1888.81px;font-size:22.20px;letter-spacing:0.000px;color:#555;-webkit-text-stroke:0.22px;font-family:'Liberation Sans', sans-serif">false</div>
<div style="left:1282px;top:1932px;width:1122px;height:1px;background:#e3e3e3"></div>
<div class="t" style="left:1301.42px;top:1950.71px;font-size:22.20px;letter-spacing:0.000px;color:#555;-webkit-text-stroke:0.22px;font-family:'Liberation Sans', sans-serif">web</div>
<div class="t" style="left:1654.02px;top:1950.71px;font-size:22.20px;letter-spacing:0.000px;color:#555;-webkit-text-stroke:0.22px;font-family:'Liberation Sans', sans-serif">web</div>
<div class="t" style="left:2023.71px;top:1950.71px;font-size:22.20px;letter-spacing:0.000px;color:#555;-webkit-text-stroke:0.22px;font-family:'Liberation Sans', sans-serif">5</div>
<div class="t" style="left:2178.48px;top:1950.71px;font-size:22.20px;letter-spacing:0.000px;color:#555;-webkit-text-stroke:0.22px;font-family:'Liberation Sans', sans-serif">false</div>
<div style="left:1282px;top:1994px;width:1122px;height:1px;background:#e3e3e3"></div>
<div class="t" style="left:1300.31px;top:2012.61px;font-size:22.20px;letter-spacing:0.000px;color:#555;-webkit-text-stroke:0.22px;font-family:'Liberation Sans', sans-serif">openinghours</div>
<div class="t" style="left:1652.91px;top:2012.61px;font-size:22.20px;letter-spacing:0.000px;color:#555;-webkit-text-stroke:0.22px;font-family:'Liberation Sans', sans-serif">openinghours</div>
<div class="t" style="left:2023.49px;top:2012.61px;font-size:22.20px;letter-spacing:0.000px;color:#555;-webkit-text-stroke:0.22px;font-family:'Liberation Sans', sans-serif">6</div>
<div class="t" style="left:2178.48px;top:2012.61px;font-size:22.20px;letter-spacing:0.000px;color:#555;-webkit-text-stroke:0.22px;font-family:'Liberation Sans', sans-serif">false</div>
<div style="left:1282px;top:2055px;width:1122px;height:1px;background:#e3e3e3"></div>
<div class="t" style="left:1300.31px;top:2074.51px;font-size:22.20px;letter-spacing:0.000px;color:#555;-webkit-text-stroke:0.22px;font-family:'Liberation Sans', sans-serif">checkbox</div>
<div class="t" style="left:1652.69px;top:2074.51px;font-size:22.20px;letter-spacing:0.000px;color:#555;-webkit-text-stroke:0.22px;font-family:'Liberation Sans', sans-serif">Checkbox Ja</div>
<div class="t" style="left:2023.49px;top:2074.51px;font-size:22.20px;letter-spacing:0.000px;color:#555;-webkit-text-stroke:0.22px;font-family:'Liberation Sans', sans-serif">7</div>
<div class="t" style="left:2178.48px;top:2074.51px;font-size:22.20px;letter-spacing:0.000px;color:#555;-webkit-text-stroke:0.22px;font-family:'Liberation Sans', sans-serif">false</div>
<div style="left:1282px;top:2117px;width:1122px;height:1px;background:#e3e3e3"></div>
<div class="t" style="left:1300.31px;top:2136.41px;font-size:22.20px;letter-spacing:0.000px;color:#555;-webkit-text-stroke:0.22px;font-family:'Liberation Sans', sans-serif">checkbox2</div>
<div class="t" style="left:1652.69px;top:2136.41px;font-size:22.20px;letter-spacing:0.000px;color:#555;-webkit-text-stroke:0.22px;font-family:'Liberation Sans', sans-serif">Checkbox Nein</div>
<div class="t" style="left:2023.71px;top:2136.41px;font-size:22.20px;letter-spacing:0.000px;color:#555;-webkit-text-stroke:0.22px;font-family:'Liberation Sans', sans-serif">8</div>
<div class="t" style="left:2178.48px;top:2136.41px;font-size:22.20px;letter-spacing:0.000px;color:#555;-webkit-text-stroke:0.22px;font-family:'Liberation Sans', sans-serif">false</div>
</body></html>
